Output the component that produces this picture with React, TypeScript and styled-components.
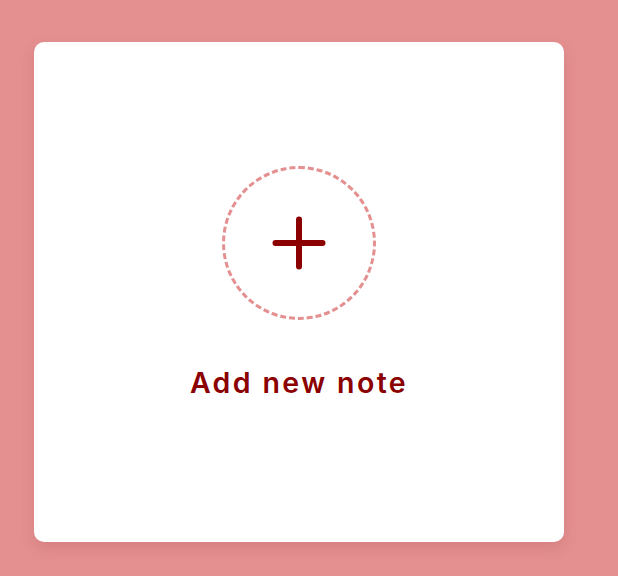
import styled, { createGlobalStyle } from "styled-components";

const GlobalStyle = createGlobalStyle`
  html, body {
    margin: 0;
    padding: 0;
    background: #e48f90;
  }
  body {
    font-family: "Inter", "Noto Sans", sans-serif;
  }
`;

const Page = styled.div`
  width: 618px;
  height: 576px;
  padding: 42px 0 0 34px;
  box-sizing: border-box;
`;

const Card = styled.button`
  width: 530px;
  height: 500px;
  box-sizing: border-box;
  background: #ffffff;
  border: none;
  border-radius: 10px;
  box-shadow: 0 6px 14px rgba(150, 60, 60, 0.18);
  display: flex;
  flex-direction: column;
  align-items: center;
  padding: 124px 0 0 0;
  cursor: pointer;
  font-family: inherit;
`;

const Circle = styled.div`
  width: 154px;
  height: 154px;
  box-sizing: border-box;
  border: 3px dashed #e48f90;
  border-radius: 50%;
  display: flex;
  align-items: center;
  justify-content: center;
`;

const Label = styled.span`
  margin-top: 45px;
  font-size: 28.5px;
  font-weight: 600;
  color: #8b0000;
  letter-spacing: 2.4px;
`;

const PlusIcon = () => (
  <svg width="58" height="58" viewBox="0 0 58 58" fill="none">
    <path
      d="M29 5.5 V52.5 M5.5 29 H52.5"
      stroke="#8b0000"
      strokeWidth="6"
      strokeLinecap="round"
    />
  </svg>
);

export default function App() {
  return (
    <>
      <GlobalStyle />
      <Page>
        <Card>
          <Circle>
            <PlusIcon />
          </Circle>
          <Label>Add new note</Label>
        </Card>
      </Page>
    </>
  );
}
